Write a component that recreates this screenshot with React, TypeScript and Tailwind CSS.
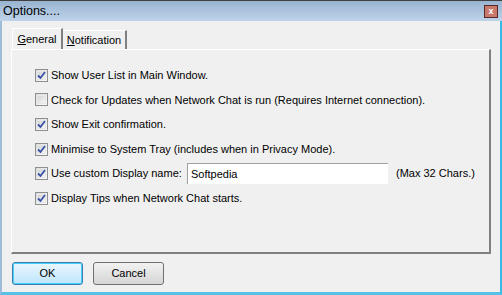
const font = "font-['Liberation_Sans',Arial,sans-serif]";

function CheckBox({ checked }: { checked: boolean }) {
  return (
    <span className="relative inline-block h-[13px] w-[13px] shrink-0 border border-[#8e8f8f] bg-gradient-to-br from-[#dcdcdc] to-[#fbfbfb]">
      <span className="absolute inset-[1px] border border-[#e6e6e6] bg-gradient-to-br from-[#d2d4d6] to-[#f6f6f6]" />
      {checked && (
        <svg className="absolute left-[1px] top-[1px]" width="9" height="9" viewBox="0 0 9 9">
          <path d="M1 4.5 L3.5 7 L8 1" fill="none" stroke="#3a52a6" strokeWidth="1.8" />
        </svg>
      )}
    </span>
  );
}

function Row({ checked, children }: { checked: boolean; children: React.ReactNode }) {
  return (
    <div className="flex h-[24.6px] items-center gap-[3px] whitespace-nowrap">
      <CheckBox checked={checked} />
      {children}
    </div>
  );
}

export default function App() {
  return (
    <div className={`${font} relative flex h-[295px] w-[502px] flex-col overflow-hidden bg-[#f0f0f0] text-[11px] text-black`}>
      {/* title bar */}
      <div className="flex h-[21px] shrink-0 items-center justify-between border-t border-[#404040] bg-gradient-to-b from-[#99b4d1] to-[#bfd4ea] pl-[3px] pr-[4px]">
        <span className="text-[12.5px] leading-none">Options....</span>
        <span className="flex h-[13px] w-[14px] items-center justify-center border border-[#5a2a2a] bg-[#c9786c] text-[9px] font-bold leading-none text-white">
          x
        </span>
      </div>
      <div className="flex flex-1 flex-col border-b-[3px] border-l-[2px] border-r-[2px] border-b-[#56c0e6] border-l-[#9fbbd8] border-r-[#3ab9e7]">
        {/* tabs */}
        <div className="flex h-[28px] items-end pl-[10px]">
          <div className="flex h-[21px] w-[51px] items-center justify-center border-l border-r-2 border-t border-l-white border-r-[#808080] border-t-white">
            <span><span className="underline">G</span>eneral</span>
          </div>
          <div className="flex h-[19px] w-[64px] items-center justify-center border-r-2 border-t border-r-[#808080] border-t-white">
            <span><span className="underline">N</span>otification</span>
          </div>
        </div>
        <div className="mx-[9px] h-[205px] border-b-2 border-l border-r-2 border-t border-b-[#808080] border-l-white border-r-[#808080] border-t-white pl-[23px] pt-[13px]">
          <Row checked>Show User List in Main Window.</Row>
          <Row checked={false}>Check for Updates when Network Chat is run (Requires Internet connection).</Row>
          <Row checked>Show Exit confirmation.</Row>
          <Row checked>Minimise to System Tray (includes when in Privacy Mode).</Row>
          <Row checked>
            <span className="w-[133px]">Use custom Display name:</span>
            <span className="flex h-[21px] w-[201px] items-center border-l border-t border-l-[#a0a0a0] border-t-[#a0a0a0] bg-white pl-[3px]">Softpedia</span>
            <span className="ml-[5px]">(Max 32 Chars.)</span>
          </Row>
          <Row checked>Display Tips when Network Chat starts.</Row>
        </div>
        <div className="flex gap-[10px] pl-[10px] pt-[8px]">
          <button className="h-[23px] w-[71px] rounded-[3px] border border-[#3c7fb1] bg-gradient-to-b from-[#eaf6fd] to-[#bee6fd] shadow-[inset_0_0_0_1px_#48d0fd]">OK</button>
          <button className="h-[23px] w-[71px] rounded-[3px] border border-[#707070] bg-gradient-to-b from-[#f2f2f2] to-[#d5d5d5]">Cancel</button>
        </div>
      </div>
    </div>
  );
}
